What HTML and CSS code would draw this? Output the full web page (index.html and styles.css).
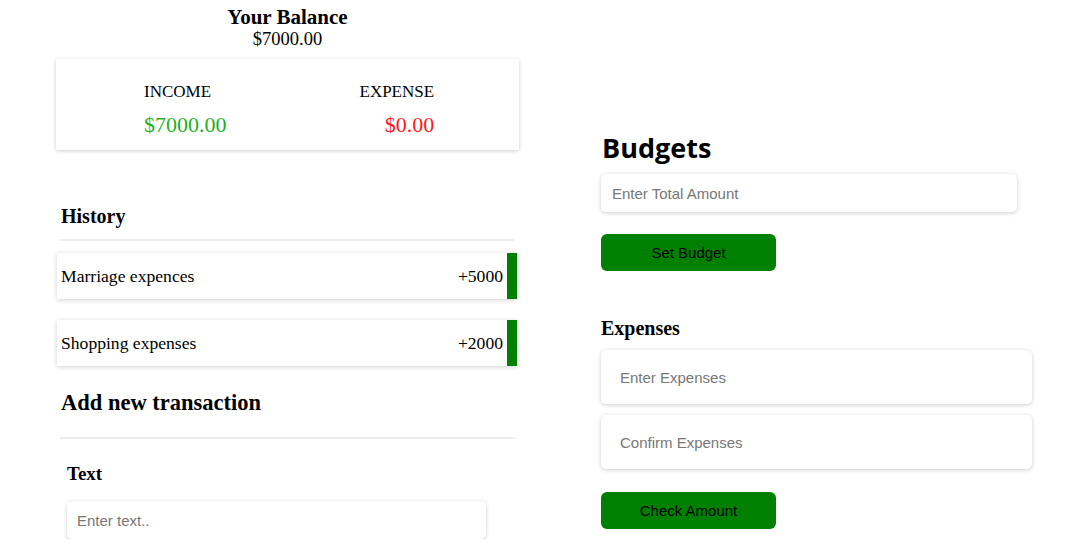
FILE: index.html
```html
<!DOCTYPE html>
<html>
<head>
<meta charset="utf-8">
<link rel="stylesheet" href="styles.css">
</head>
<body>
<div class="page">
  <div class="left">
    <h2 class="balance-title">Your Balance</h2>
    <div class="balance-amount">$7000.00</div>
    <div class="summary">
      <div class="sum-col">
        <div class="sum-label">INCOME</div>
        <div class="sum-value plus">$7000.00</div>
      </div>
      <div class="sum-col">
        <div class="sum-label">EXPENSE</div>
        <div class="sum-value minus">$0.00</div>
      </div>
    </div>
    <h3 class="history">History</h3>
    <div class="rule"></div>
    <ul class="list">
      <li class="item"><span>Marriage expences</span><span>+5000</span></li>
      <li class="item"><span>Shopping expenses</span><span>+2000</span></li>
    </ul>
    <h3 class="add-title">Add new transaction</h3>
    <div class="rule"></div>
    <label class="field-label">Text</label>
    <input class="text-input" type="text" placeholder="Enter text..">
  </div>
  <div class="right">
    <h1 class="budgets">Budgets</h1>
    <input class="input total" type="text" placeholder="Enter Total Amount">
    <button class="btn">Set Budget</button>
    <h3 class="expenses">Expenses</h3>
    <input class="input big" type="text" placeholder="Enter Expenses">
    <input class="input big" type="text" placeholder="Confirm Expenses">
    <button class="btn check">Check Amount</button>
  </div>
</div>
</body>
</html>
```

FILE: styles.css
```css
* { box-sizing: border-box; }
body {
  margin: 0;
  background: #fff;
  font-family: "Liberation Serif", "Times New Roman", serif;
  color: #000;
}
.page {
  display: flex;
  padding-left: 56px;
  gap: 82px;
  align-items: flex-start;
}
.left {
  width: 463px;
  display: flex;
  flex-direction: column;
}
.balance-title {
  margin: 5px 0 0;
  text-align: center;
  font-size: 21px;
  font-weight: bold;
  line-height: 24px;
}
.balance-amount {
  text-align: center;
  font-size: 18.5px;
  line-height: 21px;
}
.summary {
  margin-top: 9px;
  height: 91px;
  box-shadow: 0 1px 4px rgba(0,0,0,0.2);
  display: flex;
  padding: 22px 0 0 88px;
  gap: 133px;
}
.sum-col { display: flex; flex-direction: column; }
.sum-col:last-child { align-items: flex-end; }
.sum-label {
  font-size: 17px;
  line-height: 22px;
}
.sum-value {
  margin-top: 11px;
  font-size: 22px;
  line-height: 22px;
}
.plus { color: #1fb01f; }
.minus { color: #ff1a1a; }
.history {
  margin: 55px 0 0 5px;
  font-size: 20px;
  font-weight: bold;
  line-height: 22px;
}
.rule {
  margin: 12px 4px 0 4px;
  height: 2px;
  background: #eee;
}
.list {
  list-style: none;
  margin: 12px 0 0;
  padding: 0;
}
.item {
  margin: 0 2px 21px 1px;
  height: 46px;
  display: flex;
  justify-content: space-between;
  align-items: center;
  padding: 0 4px 0 4px;
  border-right: 10px solid #008000;
  box-shadow: 0 1px 5px rgba(0,0,0,0.18);
  font-size: 17.6px;
}
.add-title {
  margin: 3px 0 0 5px;
  font-size: 22.5px;
  font-weight: bold;
  line-height: 26px;
}
.add-title + .rule { margin-top: 21px; }
.field-label {
  margin: 24px 0 0 11px;
  font-size: 19px;
  font-weight: bold;
  line-height: 22px;
}
.text-input {
  margin: 16px 0 0 11px;
  width: 419px;
  height: 38px;
  border: none;
  border-radius: 5px;
  box-shadow: 0 1px 4px rgba(0,0,0,0.2);
  padding: 0 10px;
  font-family: "Liberation Sans", Arial, sans-serif;
  font-size: 15px;
  outline: none;
}
::placeholder { color: #777; }
.right {
  width: 431px;
  display: flex;
  flex-direction: column;
  align-items: flex-start;
  padding-top: 129px;
}
.budgets {
  margin: 0 0 0 1px;
  font-family: "Open Sans", "Noto Sans", sans-serif;
  font-size: 27px;
  font-weight: bold;
  line-height: 38px;
}
.input {
  border: none;
  border-radius: 5px;
  box-shadow: 0 1px 4px rgba(0,0,0,0.2);
  font-family: "Liberation Sans", Arial, sans-serif;
  font-size: 15px;
  outline: none;
  background: #fff;
}
.total {
  margin-top: 7px;
  width: 416px;
  height: 38px;
  padding: 0 11px;
}
.btn {
  margin-top: 22px;
  width: 175px;
  height: 37px;
  border: none;
  border-radius: 6px;
  background: #008000;
  color: #000;
  font-family: "Liberation Sans", Arial, sans-serif;
  font-size: 15px;
  cursor: pointer;
}
.expenses {
  margin: 45px 0 0;
  font-size: 20px;
  font-weight: bold;
  line-height: 24px;
}
.big {
  margin-top: 10px;
  width: 431px;
  height: 54px;
  padding: 0 19px;
}
.big + .big { margin-top: 11px; }
.check { margin-top: 23px; }
```
